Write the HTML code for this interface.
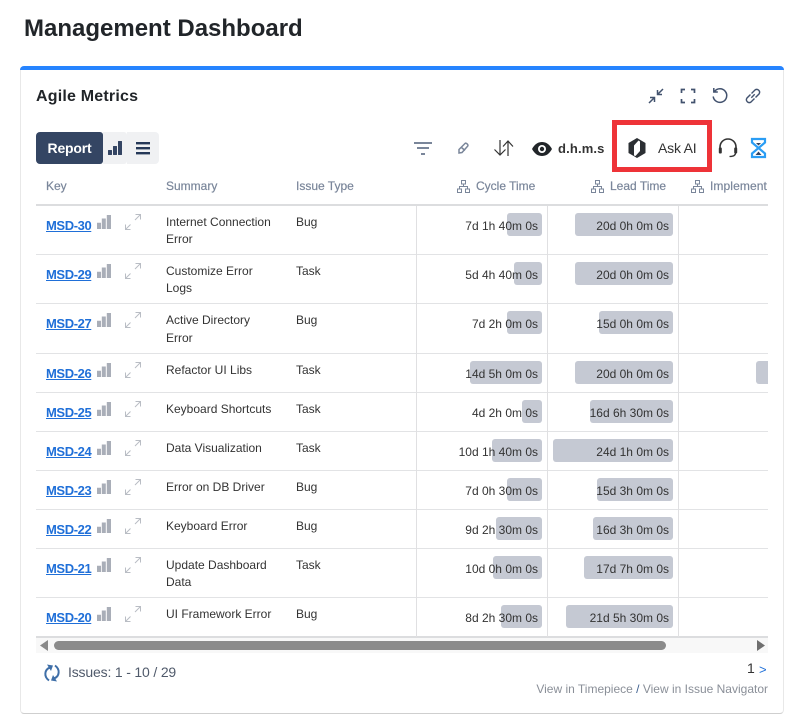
<!DOCTYPE html>
<html><head><meta charset="utf-8">
<style>
html,body{margin:0;padding:0;background:#fff;}
#p{position:relative;width:793px;height:722px;overflow:hidden;font-family:"Liberation Sans",sans-serif;color:#172b4d;}
#p div,#p a,#p svg{position:absolute;}
.t{white-space:nowrap;font-size:12px;line-height:17px;color:#333;}
.h{white-space:nowrap;font-size:12px;line-height:16px;font-weight:400;color:#7a869a;top:178px;-webkit-text-stroke:.2px #7a869a;}
.k{white-space:nowrap;font-size:13px;line-height:16px;font-weight:700;color:#1f6fd8;text-decoration:underline;left:46px;letter-spacing:-.4px;}
.b{background:#c5c9d3;border-radius:3px;height:23px;}
.v{white-space:nowrap;font-size:12px;line-height:23px;color:#333;text-align:right;width:130px;}
.l{left:36px;width:732px;height:1px;background:#e2e3e5;}
.vl{width:1px;background:#e0e0e2;top:206px;height:431px;}
</style></head><body><div id="p">
<div style="left:24px;top:13px;font-size:24px;line-height:32px;font-weight:700;color:#212529;white-space:nowrap;">Management Dashboard</div>

<div style="left:20px;top:66px;width:764px;height:648px;border:1px solid #e8e8e8;border-top:0;border-bottom:1px solid #cfcfcf;border-radius:4px;box-sizing:border-box;"></div>
<div style="left:20px;top:66px;width:764px;height:4px;background:#2684ff;border-radius:4px 4px 0 0;"></div>
<div style="left:36px;top:86px;font-size:16px;line-height:21px;font-weight:700;color:#212529;white-space:nowrap;letter-spacing:.2px;">Agile Metrics</div>

<svg style="left:647px;top:87px" width="18" height="18" viewBox="0 0 18 18" fill="none" stroke="#42526e" stroke-width="1.5"><path d="M2 16l5-5M3 10.500h4.500V15M16 2l-5 5M15 7.500h-4.500V3"/></svg>
<svg style="left:680px;top:88px" width="16" height="16" viewBox="0 0 16 16" fill="none" stroke="#42526e" stroke-width="1.7"><path d="M1.500 5V1.500H5M11 1.500h3.500V5M14.500 11v3.500H11M5 14.500H1.500V11"/></svg>
<svg style="left:711px;top:87px" width="18" height="18" viewBox="0 0 18 18" fill="none" stroke="#42526e" stroke-width="1.5"><path d="M3.500 4.500A6.800 6.800 0 1 1 2.200 9.500M2.800 1v4h4"/></svg>
<svg style="left:744px;top:87px" width="18" height="18" viewBox="0 0 18 18" fill="none" stroke="#42526e" stroke-width="1.4"><path d="M7.300 10.700l3.400-3.400M6.500 7.500l-3.600 3.600a2.900 2.900 0 0 0 4 4l3.600-3.600M7.500 6.500l3.600-3.600a2.900 2.900 0 0 1 4 4l-3.600 3.600"/></svg>

<div style="left:36px;top:132px;width:67px;height:32px;background:#344563;border-radius:4px 3px 3px 4px;color:#fff;font-size:14px;font-weight:700;line-height:32px;text-align:center;letter-spacing:-.2px;">Report</div>
<div style="left:103px;top:132px;width:24px;height:32px;background:#f0f1f3;border-radius:0 3px 3px 0;"></div>
<div style="left:127px;top:132px;width:32px;height:32px;background:#f0f1f3;border-radius:0 4px 4px 0;"></div>
<svg style="left:108px;top:140px" width="14" height="15" viewBox="0 0 14 15" fill="#344563"><rect x="0" y="10" width="4" height="5" rx=".5"/><rect x="5" y="6" width="4" height="9" rx=".5"/><rect x="10" y="1" width="4" height="14" rx=".5"/></svg>
<svg style="left:136px;top:142px" width="14" height="13" viewBox="0 0 14 13" fill="#253858"><rect x="0" y="0" width="14" height="2.400"/><rect x="0" y="5" width="14" height="2.400"/><rect x="0" y="10" width="14" height="2.400"/></svg>

<svg style="left:414px;top:141px" width="18" height="15" viewBox="0 0 18 15" fill="#7a869a"><rect x="0" y="1" width="18" height="2"/><rect x="3" y="6" width="12" height="2"/><rect x="7" y="12" width="4" height="2"/></svg>
<svg style="left:456px;top:141px" width="15" height="15" viewBox="0 0 15 15" fill="none" stroke="#7a869a" stroke-width="1.500"><path d="M3 8.500L9 2.500c1-1 3.500 1 2.800 2.500L6 11.500 3 12zM5.500 6.500l3.500 3"/></svg>
<svg style="left:493px;top:139px" width="22" height="18" viewBox="0 0 22 18" fill="none" stroke="#333" stroke-width="1.200"><path d="M7 1v15M1.500 10.500L7 16l5.500-5.500M15 17V2M10 7.500L15 2l5 5.500"/></svg>
<svg style="left:532px;top:141px" width="20" height="16" viewBox="0 0 20 16"><path d="M0 8C3 2.500 6.500 1 10 1s7 1.500 10 7c-3 5.500-6.500 7-10 7S3 13.500 0 8z" fill="#212529"/><circle cx="10" cy="8" r="4" fill="#fff"/><circle cx="10" cy="8" r="2.200" fill="#212529"/></svg>
<div style="left:558px;top:140px;font-size:13px;line-height:17px;font-weight:700;color:#333;white-space:nowrap;letter-spacing:.15px;">d.h.m.s</div>

<div style="left:612px;top:120px;width:100px;height:52px;border:5px solid #ee3338;box-sizing:border-box;"></div>
<svg style="left:627px;top:137px" width="20" height="22" viewBox="0 0 20 22"><path d="M10 1l8.500 5v10L10 21l-8.500-5V6z" fill="#2b2f33"/><path d="M11.500 3.500L7 8.500V18.500l1.500 .5 4.500-5V4.500z" fill="#fff"/></svg>
<div style="left:658px;top:140px;font-size:14px;line-height:17px;color:#333;white-space:nowrap;letter-spacing:-.2px;">Ask AI</div>
<svg style="left:717px;top:137px" width="22" height="22" viewBox="0 0 22 22" fill="none" stroke="#333" stroke-width="1.600"><path d="M3 13V10a8 8 0 0 1 16 0v3"/><rect x="1.800" y="10.500" width="3" height="6" rx="1" fill="#333" stroke="none"/><rect x="17.200" y="10.500" width="3" height="6" rx="1" fill="#333" stroke="none"/><path d="M18.500 16c0 2.500-2.500 3.500-6 3.500" stroke-width="1.300"/></svg>
<svg style="left:749px;top:137px" width="19" height="22" viewBox="0 0 19 22" fill="none" stroke="#2a9df4" stroke-width="2.200"><path d="M3 2h13v3.500L9.500 11 16 16.500V20H3v-3.500L9.500 11 3 5.500z"/><path d="M6.500 18l3-3.500 3 3.500z" fill="#344563" stroke="none"/><path d="M7 6h5L9.500 8.500z" fill="#344563" stroke="none"/></svg>

<div class="h" style="left:46px;">Key</div>
<div class="h" style="left:166px;">Summary</div>
<div class="h" style="left:296px;">Issue Type</div>
<svg style="left:457px;top:180px" width="13" height="13" viewBox="0 0 13 13" fill="none" stroke="#7a869a"><rect x="4.500" y=".5" width="4" height="3.500"/><rect x=".5" y="9" width="4" height="3.500"/><rect x="8.500" y="9" width="4" height="3.500"/><path d="M6.500 4v2.500M2.500 9V6.500h8V9"/></svg>
<div class="h" style="left:476px;">Cycle Time</div>
<svg style="left:591px;top:180px" width="13" height="13" viewBox="0 0 13 13" fill="none" stroke="#7a869a"><rect x="4.500" y=".5" width="4" height="3.500"/><rect x=".5" y="9" width="4" height="3.500"/><rect x="8.500" y="9" width="4" height="3.500"/><path d="M6.500 4v2.500M2.500 9V6.500h8V9"/></svg>
<div class="h" style="left:610px;">Lead Time</div>
<svg style="left:691px;top:180px" width="13" height="13" viewBox="0 0 13 13" fill="none" stroke="#7a869a"><rect x="4.500" y=".5" width="4" height="3.500"/><rect x=".5" y="9" width="4" height="3.500"/><rect x="8.500" y="9" width="4" height="3.500"/><path d="M6.500 4v2.500M2.500 9V6.500h8V9"/></svg>
<div style="left:710px;top:178px;width:58px;height:16px;overflow:hidden;"><div class="h" style="left:0;top:0;letter-spacing:.1px;">Implement</div></div>

<div style="left:36px;top:204px;width:732px;height:2px;background:#dcdddf;"></div>
<div class="l" style="top:254px"></div><div class="l" style="top:303px"></div><div class="l" style="top:353px"></div><div class="l" style="top:392px"></div><div class="l" style="top:431px"></div><div class="l" style="top:470px"></div><div class="l" style="top:509px"></div><div class="l" style="top:548px"></div><div class="l" style="top:597px"></div>
<div style="left:36px;top:636px;width:732px;height:2px;background:#dcdddf;"></div>
<div class="vl" style="left:416px"></div><div class="vl" style="left:547px"></div><div class="vl" style="left:678px"></div>

<div class="b" style="left:507px;top:213px;width:35px"></div><div class="b" style="left:575px;top:213px;width:98px"></div>
<div class="b" style="left:514px;top:262px;width:28px"></div><div class="b" style="left:575px;top:262px;width:98px"></div>
<div class="b" style="left:507px;top:311px;width:35px"></div><div class="b" style="left:599px;top:311px;width:74px"></div>
<div class="b" style="left:470px;top:361px;width:72px"></div><div class="b" style="left:575px;top:361px;width:98px"></div><div class="b" style="left:756px;top:361px;width:12px;border-radius:3px 0 0 3px"></div>
<div class="b" style="left:522px;top:400px;width:20px"></div><div class="b" style="left:590px;top:400px;width:83px"></div>
<div class="b" style="left:492px;top:439px;width:50px"></div><div class="b" style="left:553px;top:439px;width:120px"></div>
<div class="b" style="left:507px;top:478px;width:35px"></div><div class="b" style="left:597px;top:478px;width:76px"></div>
<div class="b" style="left:496px;top:517px;width:46px"></div><div class="b" style="left:593px;top:517px;width:80px"></div>
<div class="b" style="left:493px;top:556px;width:49px"></div><div class="b" style="left:584px;top:556px;width:89px"></div>
<div class="b" style="left:501px;top:605px;width:41px"></div><div class="b" style="left:566px;top:605px;width:107px"></div>

<div class="v" style="left:408px;top:215px">7d 1h 40m 0s</div><div class="v" style="left:539px;top:215px">20d 0h 0m 0s</div>
<div class="v" style="left:408px;top:264px">5d 4h 40m 0s</div><div class="v" style="left:539px;top:264px">20d 0h 0m 0s</div>
<div class="v" style="left:408px;top:313px">7d 2h 0m 0s</div><div class="v" style="left:539px;top:313px">15d 0h 0m 0s</div>
<div class="v" style="left:408px;top:363px">14d 5h 0m 0s</div><div class="v" style="left:539px;top:363px">20d 0h 0m 0s</div>
<div class="v" style="left:408px;top:402px">4d 2h 0m 0s</div><div class="v" style="left:539px;top:402px">16d 6h 30m 0s</div>
<div class="v" style="left:408px;top:441px">10d 1h 40m 0s</div><div class="v" style="left:539px;top:441px">24d 1h 0m 0s</div>
<div class="v" style="left:408px;top:480px">7d 0h 30m 0s</div><div class="v" style="left:539px;top:480px">15d 3h 0m 0s</div>
<div class="v" style="left:408px;top:519px">9d 2h 30m 0s</div><div class="v" style="left:539px;top:519px">16d 3h 0m 0s</div>
<div class="v" style="left:408px;top:558px">10d 0h 0m 0s</div><div class="v" style="left:539px;top:558px">17d 7h 0m 0s</div>
<div class="v" style="left:408px;top:607px">8d 2h 30m 0s</div><div class="v" style="left:539px;top:607px">21d 5h 30m 0s</div>

<div class="k" style="top:218px">MSD-30</div><div class="t" style="left:166px;top:214px">Internet Connection</div><div class="t" style="left:166px;top:231px">Error</div><div class="t" style="left:296px;top:214px">Bug</div>
<div class="k" style="top:267px">MSD-29</div><div class="t" style="left:166px;top:263px">Customize Error</div><div class="t" style="left:166px;top:280px">Logs</div><div class="t" style="left:296px;top:263px">Task</div>
<div class="k" style="top:316px">MSD-27</div><div class="t" style="left:166px;top:312px">Active Directory</div><div class="t" style="left:166px;top:330px">Error</div><div class="t" style="left:296px;top:312px">Bug</div>
<div class="k" style="top:366px">MSD-26</div><div class="t" style="left:166px;top:362px">Refactor UI Libs</div><div class="t" style="left:296px;top:362px">Task</div>
<div class="k" style="top:405px">MSD-25</div><div class="t" style="left:166px;top:401px">Keyboard Shortcuts</div><div class="t" style="left:296px;top:401px">Task</div>
<div class="k" style="top:444px">MSD-24</div><div class="t" style="left:166px;top:440px">Data Visualization</div><div class="t" style="left:296px;top:440px">Task</div>
<div class="k" style="top:483px">MSD-23</div><div class="t" style="left:166px;top:479px">Error on DB Driver</div><div class="t" style="left:296px;top:479px">Bug</div>
<div class="k" style="top:522px">MSD-22</div><div class="t" style="left:166px;top:518px">Keyboard Error</div><div class="t" style="left:296px;top:518px">Bug</div>
<div class="k" style="top:561px">MSD-21</div><div class="t" style="left:166px;top:557px">Update Dashboard</div><div class="t" style="left:166px;top:574px">Data</div><div class="t" style="left:296px;top:557px">Task</div>
<div class="k" style="top:610px">MSD-20</div><div class="t" style="left:166px;top:606px">UI Framework Error</div><div class="t" style="left:296px;top:606px">Bug</div>

<svg width="0" height="0" style="left:0;top:0"><defs>
<g id="ic"><path d="M0 8.700h4V15H0zM4.800 4.500h4V15h-4zM9.800 1h4.200v14H9.800z" fill="#a9aeb8"/><path d="M28.500 15.500l5-5M28.500 10.500v5h5M43.500 .5l-5.500 5.500M38.500 .5h5v5" fill="none" stroke="#b9bdc4" stroke-width="1"/></g>
</defs></svg>
<svg style="left:97px;top:214px" width="48" height="18"><use href="#ic"/></svg>
<svg style="left:97px;top:263px" width="48" height="18"><use href="#ic"/></svg>
<svg style="left:97px;top:312px" width="48" height="18"><use href="#ic"/></svg>
<svg style="left:97px;top:362px" width="48" height="18"><use href="#ic"/></svg>
<svg style="left:97px;top:401px" width="48" height="18"><use href="#ic"/></svg>
<svg style="left:97px;top:440px" width="48" height="18"><use href="#ic"/></svg>
<svg style="left:97px;top:479px" width="48" height="18"><use href="#ic"/></svg>
<svg style="left:97px;top:518px" width="48" height="18"><use href="#ic"/></svg>
<svg style="left:97px;top:557px" width="48" height="18"><use href="#ic"/></svg>
<svg style="left:97px;top:606px" width="48" height="18"><use href="#ic"/></svg>

<div style="left:36px;top:638px;width:732px;height:15px;background:#f8f8f8;"></div>
<svg style="left:40px;top:640px" width="9" height="11"><path d="M8 0v11L0 5.500z" fill="#8a8a8a"/></svg>
<div style="left:54px;top:641px;width:612px;height:9px;background:#8b8b8b;border-radius:5px;"></div>
<svg style="left:756px;top:640px" width="9" height="11"><path d="M1 0v11l8-5.500z" fill="#6f6f6f"/></svg>

<svg style="left:43px;top:664px" width="18" height="19" viewBox="0 0 18 19" fill="none" stroke="#3f6fa8" stroke-width="2"><path d="M7 3.500C1.500 5.500 .5 12.500 6 16.500M11 14.500C16.500 12.500 17.500 5.500 12 1.500"/><path d="M4 .5L10 1.500 8 7z" fill="#3f6fa8" stroke="none"/><path d="M14 17.500L8 16.500 10 11z" fill="#3f6fa8" stroke="none"/></svg>
<div style="left:68px;top:664px;font-size:14px;line-height:17px;color:#505a6b;white-space:nowrap;letter-spacing:-.17px;">Issues: 1 - 10 / 29</div>
<div style="left:747px;top:660px;font-size:14px;line-height:17px;color:#333;">1</div>
<div style="left:759px;top:661px;font-size:13px;line-height:17px;color:#1f6fd8;">&gt;</div>
<div style="left:468px;width:300px;top:681px;text-align:right;font-size:12px;line-height:16px;color:#8a8f98;white-space:nowrap;">View in Timepiece <span style="color:#3d5f8f">/</span> View in Issue Navigator</div>
</div></body></html>
